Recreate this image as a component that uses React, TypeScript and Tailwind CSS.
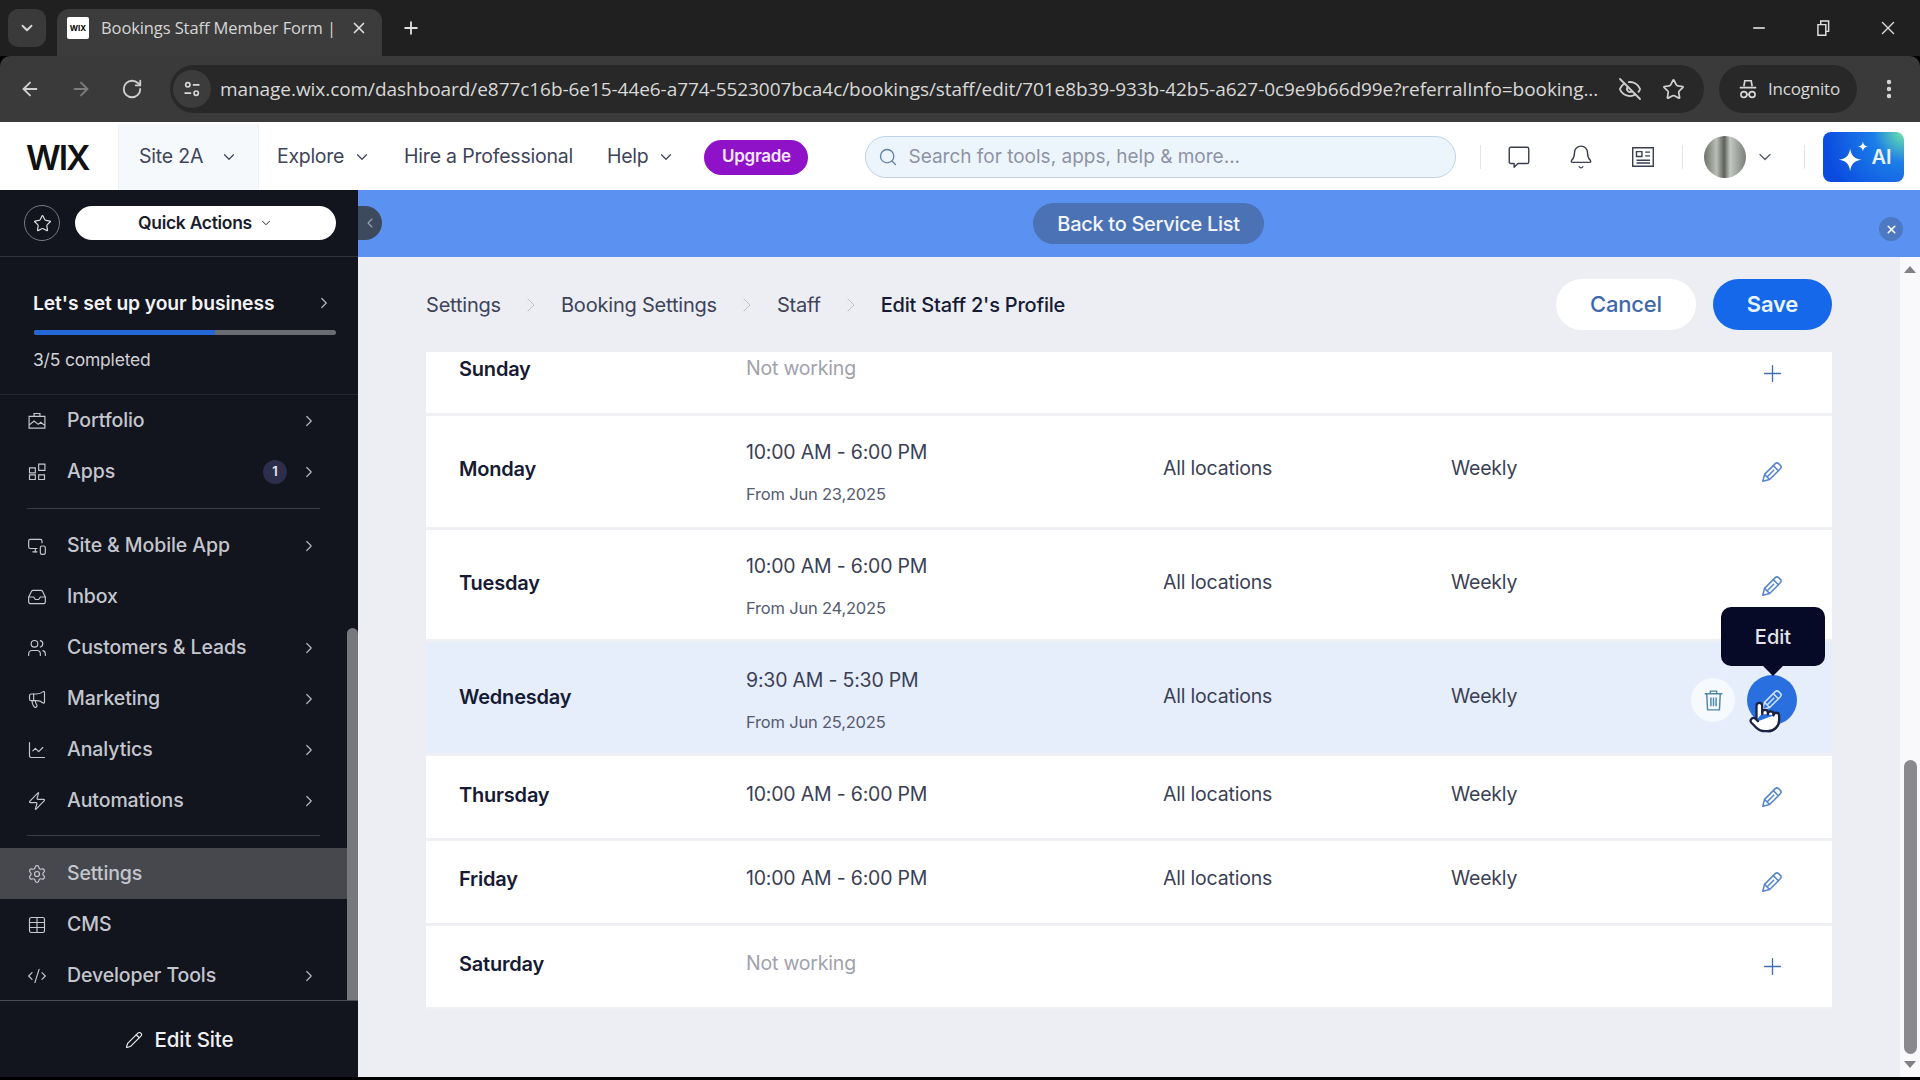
import React from "react";
import {
  ChevronDown, ChevronRight, ChevronLeft, X, Plus, Minus, ArrowLeft, ArrowRight, RotateCw, EyeOff, Star,
  EllipsisVertical, Bell, Search, Pointer, MonitorSmartphone, Inbox, Users, Megaphone,
  ChartLine, Zap, Settings, Table, CodeXml, Pencil,
} from "lucide-react";

const PencilIcon = ({ className }: { className?: string }) => (
  <svg viewBox="0 0 24 24" fill="none" stroke="currentColor" strokeWidth="1.4" strokeLinejoin="round" className={className}>
    <path d="M3.500 20.500l1.600-6.300L15 4.300a2.200 2.200 0 0 1 3.100 0l1.600 1.600a2.200 2.200 0 0 1 0 3.100l-9.900 9.900z" />
    <path d="M13.200 6.100l4.700 4.700M5.100 14.200l4.700 4.700M7 17l7-7" />
  </svg>
);

const TrashIcon = ({ className }: { className?: string }) => (
  <svg viewBox="0 0 24 24" fill="none" stroke="currentColor" strokeWidth="1.4" className={className}>
    <path d="M3.500 5.500h17M9 5.500V3h6v2.500M5.500 5.500l.8 15.500h11.400l.8-15.500M9.500 9v8.500M12 9v8.500M14.500 9v8.500" />
  </svg>
);

const Incognito = ({ className }: { className?: string }) => (
  <svg viewBox="0 0 24 24" fill="none" stroke="currentColor" strokeWidth="1.8" className={className}>
    <path d="M7.500 9l1-6h7l1 6M3 10.500h18" />
    <circle cx="7.500" cy="18" r="3.200" />
    <circle cx="16.500" cy="18" r="3.200" />
    <path d="M10.700 18h2.600" />
  </svg>
);

const Tune = ({ className }: { className?: string }) => (
  <svg viewBox="0 0 24 24" fill="none" stroke="currentColor" strokeWidth="2" className={className}>
    <circle cx="7" cy="7" r="2.600" />
    <path d="M13 7h8M3 17h8" />
    <circle cx="17" cy="17" r="2.600" />
  </svg>
);

const PortfolioIcon = ({ className }: { className?: string }) => (
  <svg viewBox="0 0 24 24" fill="none" stroke="currentColor" strokeWidth="1.4" className={className}>
    <path d="M2.500 6.500h19v14h-19zM8.500 6.500V3h7v3.500M2.500 17l6-5 5 4 3-2.500 5 4" />
  </svg>
);

const AppsIcon = ({ className }: { className?: string }) => (
  <svg viewBox="0 0 24 24" fill="none" stroke="currentColor" strokeWidth="1.4" className={className}>
    <path d="M3 7h7v6H3zM14 2.500h7.500V10H14zM3 15.500h7V21H3zM14 15.500h7V21h-7z" />
  </svg>
);

const ChatIcon = ({ className }: { className?: string }) => (
  <svg viewBox="0 0 24 24" fill="none" stroke="currentColor" strokeWidth="1.300" strokeLinejoin="round" className={className}>
    <path d="M4.500 3h15A1.500 1.500 0 0 1 21 4.500v12a1.500 1.500 0 0 1-1.500 1.500H11l-3.500 3.500V18h-3A1.500 1.500 0 0 1 3 16.500v-12A1.500 1.500 0 0 1 4.500 3z" />
  </svg>
);

const NewsIcon = ({ className }: { className?: string }) => (
  <svg viewBox="0 0 24 24" fill="none" stroke="currentColor" strokeWidth="1.300" className={className}>
    <path d="M2.500 3.500h19v17h-19zM6 7h5v4.500H6zM14 7.500h4.500M14 11h4.500M6 15h12.500M6 17.500h12.500" />
  </svg>
);

const day = "font-['Inter',sans-serif] font-semibold text-[20px] tracking-[-0.2px] text-[#161a33]";
const cell = "font-['Inter',sans-serif] text-[19.500px] tracking-[-0.2px] text-[#3a3f55]";

function Row({
  name, time, from, loc, h, action, active, children, offset, pad, actionOffset,
}: {
  name: string; time?: string; from?: string; loc?: boolean; h: string; action: "edit" | "add" | "none"; active?: boolean; children?: React.ReactNode; offset?: string; pad?: string; actionOffset?: string;
}) {
  const lift = from ? "mb-[7px]" : "";
  return (
    <div className={`relative flex items-center ${h} ${pad ?? ""} ${active ? "bg-[#e6edfb]" : "bg-white"} border-b-[3px] border-[#eef0f4] pl-[33px] pr-[47px]`}>
      <div className={`flex flex-1 items-center ${offset ?? "pb-[5px]"}`}>
        <div className={`w-[287px] shrink-0 ${day} ${lift}`}>{name}</div>
        <div className="w-[417px] shrink-0">
          {time ? (
            <div className={cell}>{time}</div>
          ) : (
            <div className={`${cell} !text-[#9fa2ad]`}>Not working</div>
          )}
          {from && <div className="mt-[15px] font-['Inter',sans-serif] text-[16.500px] tracking-[-0.2px] text-[#565b70]">{from}</div>}
        </div>
        {loc && <div className={`w-[288px] shrink-0 ${cell} ${lift}`}>All locations</div>}
        {loc && <div className={`${cell} ${lift}`}>Weekly</div>}
      </div>
      <div className={`flex h-[26px] w-[26px] items-center justify-center text-[#5685cc] ${actionOffset ?? ""}`}>
        {action === "edit" && <PencilIcon className="h-[26px] w-[26px] shrink-0" />}
        {action === "add" && <Plus className="h-[27px] w-[27px] shrink-0 text-[#3f6fb0]" strokeWidth={1.2} />}
      </div>
      {children}
    </div>
  );
}

function NavItem({ icon, label, arrow = true, badge, active }: { icon: React.ReactNode; label: string; arrow?: boolean; badge?: boolean; active?: boolean }) {
  return (
    <div className={`flex h-[51px] items-center pl-[27px] pr-[29px] ${active ? "bg-[#46484d]" : ""}`}>
      <span className="flex h-[20px] w-[20px] items-center justify-center text-[#c6c8d0]">{icon}</span>
      <span className="ml-[20px] flex-1 font-['Inter',sans-serif] text-[19.500px] font-medium tracking-[-0.1px] text-[#c4c6ce]">{label}</span>
      {badge && <span className="mr-[13px] flex h-[24px] w-[24px] items-center justify-center rounded-full bg-[#2d2e4c] font-['Inter',sans-serif] text-[13px] font-semibold text-[#e6e6ee]">1</span>}
      {arrow && <ChevronRight className="h-[18px] w-[18px] text-[#b4b6be]" strokeWidth={1.6} />}
    </div>
  );
}

const ic = "h-[20px] w-[20px]";
const crumb = "mx-[18px] h-[24px] w-[24px] text-[#bfc1c9]";

export default function App() {
  return (
    <div className="flex h-[1080px] w-[1920px] flex-col overflow-hidden bg-black">
      {/* tab strip */}
      <div className="flex h-[56px] items-end bg-[#202020] pl-[8px]">
        <div className="mb-[9px] flex h-[38px] w-[38px] items-center justify-center rounded-[10px] bg-[#3a3a3a] text-[#d8d8d8]">
          <ChevronDown className="h-[18px] w-[18px]" strokeWidth={2.5} />
        </div>
        <div className="ml-[11px] flex h-[47px] w-[325px] items-center rounded-t-[12px] bg-[#3c3c3c] pl-[10px] pb-[9px]">
          <div className="flex h-[22px] w-[22px] items-center justify-center rounded-[2px] bg-white font-['Inter',sans-serif] text-[8px] font-bold text-black">WIX</div>
          <span className="ml-[12px] w-[236px] whitespace-nowrap font-['Open_Sans',sans-serif] text-[16.500px] tracking-[-0.1px] text-[#d6d6d6]">Bookings Staff Member Form |</span>
          <X className="ml-[13px] h-[18px] w-[18px] text-[#e0e0e0]" strokeWidth={2.2} />
        </div>
        <Plus className="mb-[18px] ml-[19px] h-[20px] w-[20px] text-[#e0e0e0]" strokeWidth={2.2} />
        <div className="flex-1" />
        <Minus className="mb-[19px] h-[18px] w-[18px] text-[#f0f0f0]" strokeWidth={2} />
        <svg viewBox="0 0 16 16" fill="none" stroke="#e0e0e0" strokeWidth="1.300" className="mb-[19px] ml-[46px] h-[18px] w-[18px]">
          <path d="M3.500 5h7v9.500h-7zM6 5V1.800h7v9.200h-2.500" />
        </svg>
        <X className="mb-[17px] ml-[45px] mr-[21px] h-[22px] w-[22px] text-[#e0e0e0]" strokeWidth={1.5} />
      </div>
      {/* toolbar */}
      <div className="flex h-[66px] items-center rounded-t-[10px] bg-[#3a3a3a] pl-[19px]">
        <ArrowLeft className="h-[22px] w-[22px] text-[#d0d0d0]" strokeWidth={2} />
        <ArrowRight className="ml-[29px] h-[22px] w-[22px] text-[#7d7d7d]" strokeWidth={2} />
        <RotateCw className="ml-[29px] h-[22px] w-[22px] text-[#d0d0d0]" strokeWidth={2} />
        <div className="ml-[27px] flex h-[48px] w-[1534px] items-center rounded-full bg-[#282828] pl-[3px]">
          <span className="flex h-[38px] w-[38px] items-center justify-center rounded-full bg-[#3c3c3c] text-[#d8d8d8]"><Tune className="h-[20px] w-[20px]" /></span>
          <span className="ml-[9px] w-[1380px] whitespace-nowrap font-['Open_Sans',sans-serif] text-[19px] tracking-[-0.06px] text-[#d8d8d8]">manage.wix.com/dashboard/e877c16b-6e15-44e6-a774-5523007bca4c/bookings/staff/edit/701e8b39-933b-42b5-a627-0c9e9b66d99e?referralInfo=booking...</span>
          <EyeOff className="ml-[18px] h-[24px] w-[24px] text-[#d0d0d0]" strokeWidth={1.8} />
          <Star className="ml-[20px] h-[23px] w-[23px] text-[#d0d0d0]" strokeWidth={1.8} />
        </div>
        <div className="ml-[15px] flex h-[48px] w-[138px] items-center rounded-full bg-[#282828] pl-[18px]">
          <Incognito className="h-[22px] w-[22px] text-[#d8d8d8]" />
          <span className="ml-[9px] font-['Open_Sans',sans-serif] text-[17px] tracking-[-0.2px] text-[#d8d8d8]">Incognito</span>
        </div>
        <EllipsisVertical className="ml-[20px] h-[24px] w-[24px] text-[#d8d8d8]" strokeWidth={2.4} />
      </div>
      {/* wix top bar */}
      <div className="flex h-[68px] items-center bg-white pt-[2px] font-['Inter',sans-serif] text-[#3f4459]">
        <div className="flex h-full w-[118px] items-center pl-[26px] text-[34px] font-semibold tracking-[-2px] text-[#111]">WIX</div>
        <div className="flex h-full w-[141px] items-center border-x border-[#edf0f4] bg-[#f6f9fc] pl-[20px] text-[19.500px] tracking-[-0.2px]">
          Site 2A
          <ChevronDown className="ml-[17px] h-[18px] w-[18px]" strokeWidth={1.6} />
        </div>
        <span className="ml-[18px] text-[19.500px] tracking-[-0.3px]">Explore</span>
        <ChevronDown className="ml-[9px] h-[18px] w-[18px]" strokeWidth={1.6} />
        <span className="ml-[33px] text-[19.500px] tracking-[-0.2px]">Hire a Professional</span>
        <span className="ml-[34px] text-[19.500px] tracking-[-0.3px]">Help</span>
        <ChevronDown className="ml-[9px] h-[18px] w-[18px]" strokeWidth={1.6} />
        <span className="ml-[29px] flex h-[35px] w-[104px] items-center justify-center rounded-full bg-[#8f12c9] text-[17px] font-semibold tracking-[-0.3px] text-[#f4e6fb]">Upgrade</span>
        <div className="ml-[57px] flex h-[42px] w-[591px] shrink-0 items-center rounded-full border border-[#bfd3e9] bg-[#edf5fc] pl-[12px]">
          <Search className="h-[20px] w-[20px] text-[#5f7fa6]" strokeWidth={1.6} />
          <span className="ml-[10px] text-[19px] text-[#8d93a5]">Search for tools, apps, help &amp; more...</span>
        </div>
        <div className="ml-[24px] h-[24px] w-[1px] bg-[#e2e4ea]" />
        <ChatIcon className="ml-[25px] h-[26px] w-[26px] text-[#3a3f50]" />
        <Bell className="ml-[36px] h-[26px] w-[26px] text-[#3a3f50]" strokeWidth={1.3} />
        <NewsIcon className="ml-[36px] h-[26px] w-[26px] text-[#3a3f50]" />
        <div className="ml-[26px] h-[24px] w-[1px] bg-[#e2e4ea]" />
        <div className="ml-[21px] h-[42px] w-[42px] rounded-full bg-[linear-gradient(90deg,#6e7268,#b8bdb6_30%,#5d6058_48%,#c2c7c2_62%,#7b7f78)]" />
        <ChevronDown className="ml-[9px] h-[20px] w-[20px] text-[#555a6a]" strokeWidth={1.6} />
        <div className="ml-[29px] h-[24px] w-[1px] bg-[#e2e4ea]" />
        <div className="ml-[18px] flex h-[50px] w-[81px] items-center justify-center rounded-[8px] bg-[radial-gradient(circle_at_100%_0%,#6ee7a8_0%,#1c7ee8_32%,#0b4be0_85%)] text-[20px] font-semibold text-[#e8f1ff]">
          <svg viewBox="0 0 24 24" fill="white" className="h-[34px] w-[34px]">
            <path d="M10 6c.8 5 2.500 7 8 8-5.500 1-7.200 3-8 8-.8-5-2.500-7-8-8 5.500-1 7.200-3 8-8z" />
            <path d="M19 1c.3 2.200 1.200 3.200 3.500 3.500-2.300.3-3.200 1.300-3.500 3.500-.3-2.200-1.200-3.200-3.500-3.500 2.300-.3 3.200-1.300 3.500-3.500z" />
          </svg>
          <span className="ml-[1px]">AI</span>
        </div>
      </div>
      {/* body */}
      <div className="flex h-[887px]">
        {/* sidebar */}
        <div className="flex w-[358px] shrink-0 flex-col bg-[#12141e]">
          <div className="flex h-[67px] items-center border-b border-[#30323c] pl-[24px]">
            <span className="flex h-[36px] w-[36px] items-center justify-center rounded-full border border-[#777a85] text-[#dcdde2]">
              <Star className="h-[19px] w-[19px]" strokeWidth={1.5} />
            </span>
            <div className="ml-[15px] flex h-[34px] w-[261px] items-center justify-center rounded-full bg-white font-['Inter',sans-serif] text-[17.500px] font-semibold tracking-[-0.3px] text-[#1b1d2c]">
              Quick Actions
              <ChevronDown className="ml-[7px] h-[14px] w-[14px]" strokeWidth={1.6} />
            </div>
          </div>
          <div className="h-[138px] border-b border-[#25272f] pl-[33px] pr-[22px] pt-[34px]">
            <div className="flex items-center justify-between">
              <span className="font-['Inter',sans-serif] text-[19.300px] font-semibold leading-[24px] tracking-[-0.1px] text-[#f2f2f4]">Let's set up your business</span>
              <ChevronRight className="mr-[3px] h-[18px] w-[18px] text-[#b4b6be]" strokeWidth={1.6} />
            </div>
            <div className="ml-[1px] mt-[15px] flex h-[5px] w-[302px] overflow-hidden rounded-full bg-[#6a6c74]">
              <div className="h-full w-[181px] bg-[#2468d8]" />
            </div>
            <div className="mt-[12px] font-['Inter',sans-serif] text-[17.500px] tracking-[-0.2px] text-[#d0d1d6]">3/5 completed</div>
          </div>
          <div className="flex h-[605px]">
            <div className="w-[347px] shrink-0">
              <NavItem icon={<PortfolioIcon className={ic} />} label="Portfolio" />
              <NavItem icon={<AppsIcon className={ic} />} label="Apps" badge />
              <div className="mx-[27px] my-[11px] h-[1px] bg-[#393b45]" />
              <NavItem icon={<MonitorSmartphone className={ic} strokeWidth={1.4} />} label="Site & Mobile App" />
              <NavItem icon={<Inbox className={ic} strokeWidth={1.4} />} label="Inbox" arrow={false} />
              <NavItem icon={<Users className={ic} strokeWidth={1.4} />} label="Customers & Leads" />
              <NavItem icon={<Megaphone className={ic} strokeWidth={1.4} />} label="Marketing" />
              <NavItem icon={<ChartLine className={ic} strokeWidth={1.4} />} label="Analytics" />
              <NavItem icon={<Zap className={ic} strokeWidth={1.4} />} label="Automations" />
              <div className="mx-[27px] mb-[12px] mt-[9px] h-[1px] bg-[#393b45]" />
              <NavItem icon={<Settings className={ic} strokeWidth={1.4} />} label="Settings" arrow={false} active />
              <NavItem icon={<Table className={ic} strokeWidth={1.4} />} label="CMS" arrow={false} />
              <NavItem icon={<CodeXml className={ic} strokeWidth={1.4} />} label="Developer Tools" />
            </div>
            <div className="flex flex-1 flex-col justify-end">
              <div className="h-[372px] rounded-t-full bg-[#77787e]" />
            </div>
          </div>
          <div className="flex flex-1 items-center justify-center border-t border-[#4a4c56] pt-[2px] text-[#f0f0f3]">
            <Pencil className="h-[18px] w-[18px]" strokeWidth={1.5} />
            <span className="ml-[12px] font-['Inter',sans-serif] text-[20.500px] font-medium tracking-[-0.1px]">Edit Site</span>
          </div>
        </div>
        {/* main */}
        <div className="flex flex-1 flex-col bg-[#eceef3]">
          <div className="relative flex h-[67px] shrink-0 items-center justify-center bg-[#5b92f2]">
            <div className="absolute left-0 top-[16px] flex h-[34px] w-[24px] items-center justify-center rounded-r-full bg-[#3d4a5e] text-[#9aa4b6]">
              <ChevronLeft className="h-[16px] w-[16px]" strokeWidth={1.6} />
            </div>
            <div className="ml-[19px] flex h-[41px] w-[231px] items-center justify-center rounded-full bg-[#4a72b5] font-['Inter',sans-serif] text-[20px] font-medium tracking-[-0.3px] text-[#f2f5fb]">Back to Service List</div>
            <div className="absolute right-[17px] top-[27px] flex h-[24px] w-[24px] items-center justify-center rounded-full bg-[#4d78c2] text-white">
              <X className="h-[13px] w-[13px]" strokeWidth={3} />
            </div>
          </div>
          <div className="flex flex-1">
            <div className="flex flex-1 flex-col px-[68px]">
              <div className="flex h-[95px] shrink-0 items-center font-['Inter',sans-serif] text-[20px] tracking-[-0.2px] text-[#3e4357]">
                <span>Settings</span>
                <ChevronRight className={crumb} strokeWidth={1} />
                <span>Booking Settings</span>
                <ChevronRight className={crumb} strokeWidth={1} />
                <span>Staff</span>
                <ChevronRight className={crumb} strokeWidth={1} />
                <span className="font-medium text-[#161a33]">Edit Staff 2's Profile</span>
                <div className="flex-1" />
                <span className="flex h-[51px] w-[140px] items-center justify-center rounded-full bg-white text-[22px] font-medium text-[#3f67ad]">Cancel</span>
                <span className="ml-[17px] flex h-[51px] w-[119px] items-center justify-center rounded-full bg-[#1668ea] text-[22px] font-semibold text-[#e9f5ff]">Save</span>
              </div>
              <Row name="Sunday" h="h-[64px] shrink-0" action="add" offset="pb-[27px]" actionOffset="mb-[19px]" />
              <Row name="Monday" time="10:00 AM - 6:00 PM" from="From Jun 23,2025" loc h="h-[114px] shrink-0" action="edit" offset="pb-0" pad="pt-[1px]" />
              <Row name="Tuesday" time="10:00 AM - 6:00 PM" from="From Jun 24,2025" loc h="h-[112px] shrink-0" action="edit" offset="pb-0" pad="pt-[3px]" />
              <Row name="Wednesday" time="9:30 AM - 5:30 PM" from="From Jun 25,2025" loc h="h-[114px] shrink-0" action="none" active offset="pb-0" pad="pt-[6px]">
                <div className="absolute right-[97px] top-[36px] flex h-[44px] w-[44px] items-center justify-center rounded-full bg-[#f6faff] text-[#4d86a8]">
                  <TrashIcon className="h-[25px] w-[25px]" />
                </div>
                <div className="absolute right-[35px] top-[33px] flex h-[50px] w-[50px] items-center justify-center rounded-full bg-[#2a6fe0] text-[#cfe0fb]">
                  <PencilIcon className="h-[26px] w-[26px]" />
                </div>
                <div className="absolute right-[7px] top-[-35px] flex h-[59px] w-[104px] items-center justify-center rounded-[10px] bg-[#060a26] font-['Inter',sans-serif] text-[20px] font-medium text-[#e4e4ea]">
                  Edit
                  <span className="absolute bottom-[-7px] left-[45px] h-[14px] w-[14px] rotate-45 bg-[#060a26]" />
                </div>
                <Pointer className="absolute right-[50px] top-[58px] h-[34px] w-[34px] fill-white text-[#1c2340]" strokeWidth={1.6} />
              </Row>
              <Row name="Thursday" time="10:00 AM - 6:00 PM" loc h="h-[85px] shrink-0" action="edit" offset="pb-[4px]" />
              <Row name="Friday" time="10:00 AM - 6:00 PM" loc h="h-[85px] shrink-0" action="edit" offset="pb-[6px]" />
              <Row name="Saturday" h="h-[84px] shrink-0" action="add" offset="pb-[6px]" />
            </div>
            <div className="flex w-[20px] shrink-0 flex-col items-center bg-[#f9f9fb]">
              <div className="mt-[9px] h-0 w-0 border-x-[6px] border-b-[7px] border-x-transparent border-b-[#7f7f85]" />
              <div className="flex-1" />
              <div className="h-[294px] w-[13px] rounded-full bg-[#8a8a8e]" />
              <div className="mb-[9px] mt-[7px] h-0 w-0 border-x-[6px] border-t-[7px] border-x-transparent border-t-[#7f7f85]" />
            </div>
          </div>
        </div>
      </div>
    </div>
  );
}
